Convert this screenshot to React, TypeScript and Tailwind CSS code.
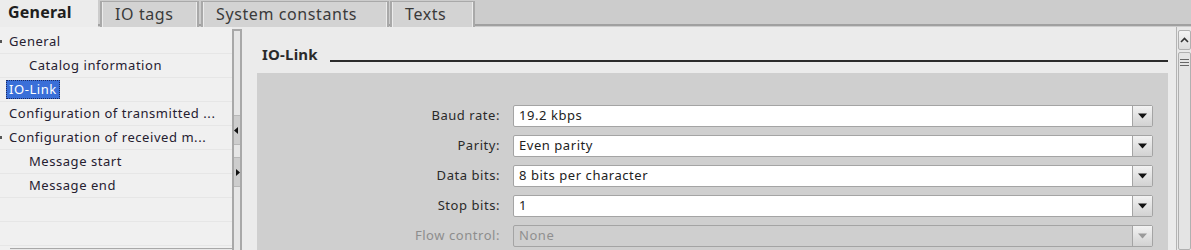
import React from "react";

const font = { fontFamily: '"Noto Sans", "Open Sans", sans-serif' };

function Tab({ label, active, w }: { label: string; active?: boolean; w: string }) {
  if (active) {
    return (
      <div className={`${w} h-[27px] bg-[#ececec] flex items-center pl-[8px] pb-[3px] text-[16px] tracking-[0.2px] font-bold text-[#1e1e1e] relative z-10`}>
        {label}
      </div>
    );
  }
  return (
    <div className={`${w} h-[26px] border-l-[2px] border-r-[2px] border-t-[1px] border-[#a9a9a9] bg-[#d3d3d3] flex items-center pl-[13px] pb-[2px] text-[16px] tracking-[0.6px] text-[#3a3a3a] shadow-[inset_1px_0_0_#ececec,inset_-1px_0_0_#ececec]`}>
      {label}
    </div>
  );
}

function TreeRow({ label, indent, arrow, selected }: { label?: string; indent?: boolean; arrow?: boolean; selected?: boolean }) {
  return (
    <div className="h-[24px] border-b border-[#e6e6e6] flex items-center relative text-[13px] tracking-[0.55px] text-[#262030]">
      {arrow && <div className="absolute left-0 top-[10px] w-[2px] h-[3px] bg-[#555]" />}
      {label && (
        <span
          className={`${indent ? "ml-[29px]" : selected ? "ml-[6px]" : "ml-[9px]"} ${
            selected ? "bg-[#3a6fd8] text-white px-[3px] outline-dotted outline-1 outline-[#1b2a60] -outline-offset-1 leading-[19px]" : ""
          } whitespace-nowrap`}
        >
          {label}
        </span>
      )}
    </div>
  );
}

function Field({ label, value, disabled }: { label: string; value: string; disabled?: boolean }) {
  return (
    <div className="flex items-center h-[22px]">
      <div className={`w-[243px] text-right text-[13px] tracking-[0.55px] ${disabled ? "text-[#8d8d8d]" : "text-[#2a2a2a]"}`}>{label}</div>
      <div
        className={`ml-[13px] flex-1 h-[22px] flex rounded-[2px] border border-[#a4a4a4] ${disabled ? "bg-[#cfcfcf]" : "bg-white"}`}
      >
        <div className={`flex-1 flex items-center pl-[5px] text-[13px] tracking-[0.55px] ${disabled ? "text-[#8f8f8f]" : "text-[#222]"}`}>{value}</div>
        <div className="w-[20px] h-full border-l border-[#a4a4a4] bg-gradient-to-b from-[#f2f2f2] to-[#d2d2d2] flex items-center justify-center">
          <svg width="9" height="6" viewBox="0 0 9 6">
            <path d="M0 0.5 L9 0.5 L4.5 5.5 Z" fill={disabled ? "#9a9a9a" : "#111"} />
          </svg>
        </div>
      </div>
    </div>
  );
}

export default function App() {
  return (
    <div className="w-[1191px] h-[250px] overflow-hidden bg-[#ebebeb] flex flex-col" style={font}>
      {/* tab strip */}
      <div className="h-[27px] bg-[#cccccc] flex items-end relative">
        <div className="absolute left-0 right-0 bottom-[1px] h-[2px] bg-[#a0a0a0]" />
        <div className="flex items-end relative">
          <Tab label="General" active w="w-[98px]" />
          <div className="w-[2px]" />
          <Tab label="IO tags" w="w-[99px]" />
          <div className="w-[2px]" />
          <Tab label="System constants" w="w-[188px]" />
          <div className="w-[1px]" />
          <Tab label="Texts" w="w-[85px]" />
        </div>
      </div>
      {/* body */}
      <div className="flex-1 flex min-h-0">
        {/* tree */}
        <div className="w-[232px] bg-[#f0f0f0] pt-[3px] flex flex-col relative">
          <TreeRow label="General" arrow />
          <TreeRow label="Catalog information" indent />
          <TreeRow label="IO-Link" selected />
          <TreeRow label="Configuration of transmitted ..." />
          <TreeRow label="Configuration of received m..." arrow />
          <TreeRow label="Message start" indent />
          <TreeRow label="Message end" indent />
          <TreeRow />
          <TreeRow />
          <div className="absolute left-[10px] right-[0px] bottom-0 h-[2px] border-t border-[#a8a8a8] bg-[#e8e8e8]" />
        </div>
        {/* splitter */}
        <div className="w-[10px] mt-[2px] border-l-[2px] border-r-[2px] border-t-[2px] border-[#a8a8a8] bg-[#e6e6e6] flex flex-col">
          <div className="h-[84px]" />
          <div className="h-[30px] bg-[#cdcdcd] border-y border-[#b8b8b8] flex items-center justify-start">
            <svg width="4" height="7" viewBox="0 0 4 7"><path d="M4 0 L0 3.5 L4 7 Z" fill="#111" /></svg>
          </div>
          <div className="h-[12px]" />
          <div className="h-[30px] bg-[#cdcdcd] border-y border-[#b8b8b8] flex items-center justify-end">
            <svg width="4" height="7" viewBox="0 0 4 7"><path d="M0 0 L4 3.5 L0 7 Z" fill="#111" /></svg>
          </div>
          <div className="flex-1" />
        </div>
        {/* right panel */}
        <div className="flex-1 flex flex-col pl-[15px] pr-[8px]">
          <div className="h-[46px] flex items-center pl-[5px] pt-[8px]">
            <span className="text-[15px] font-bold tracking-[0.2px] text-[#2a2a2a]">IO-Link</span>
            <div className="flex-1 ml-[12px] h-[1.5px] bg-[#2b2b2b] mt-[14px]" />
          </div>
          <div className="flex-1 bg-[#cfcfcf] pt-[32px] pr-[15px] flex flex-col gap-[8px]">
            <Field label="Baud rate:" value="19.2 kbps" />
            <Field label="Parity:" value="Even parity" />
            <Field label="Data bits:" value="8 bits per character" />
            <Field label="Stop bits:" value="1" />
            <Field label="Flow control:" value="None" disabled />
          </div>
        </div>
        {/* scrollbar */}
        <div className="w-[15px] border-l border-[#b4b4b4] bg-[#e9e9e9] flex flex-col pt-[3px] pl-[1px]">
          <div className="h-[20px] rounded-[2px] border border-[#b0b0b0] bg-gradient-to-b from-[#f4f4f4] to-[#dcdcdc] flex items-center justify-center">
            <svg width="9" height="6" viewBox="0 0 9 6"><path d="M1 5 L4.5 1.5 L8 5" stroke="#333" strokeWidth="1.6" fill="none" /></svg>
          </div>
          <div className="mt-[2px] flex-1 rounded-[2px] border border-[#b0b0b0] bg-[#e4e4e4] flex flex-col items-center pt-[6px] gap-[2px]">
            <div className="w-[9px] h-[1px] bg-[#666]" />
            <div className="w-[9px] h-[1px] bg-[#666]" />
            <div className="w-[9px] h-[1px] bg-[#666]" />
          </div>
        </div>
      </div>
    </div>
  );
}
